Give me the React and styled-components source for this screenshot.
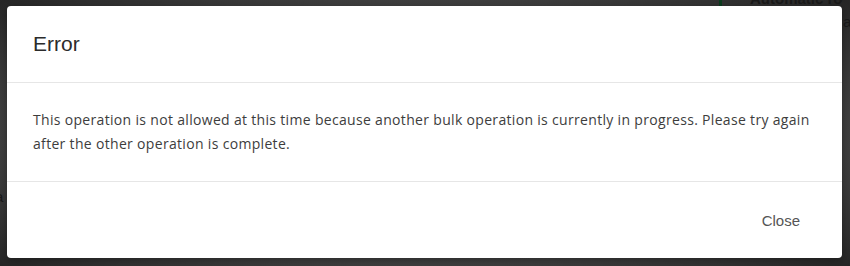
import styled, { createGlobalStyle } from "styled-components";

const GlobalStyle = createGlobalStyle`
  html, body {
    margin: 0;
    padding: 0;
  }
  body {
    width: 850px;
    height: 266px;
    overflow: hidden;
    background: #3a3a3a;
  }
`;

const ErrorDialog = () => {
  return (
    <Page>
      <GlobalStyle />
      <Behind>
        <GreenBar />
        <BehindTitle>Automatic ro</BehindTitle>
        <BehindLetter>a</BehindLetter>
        <SideLetter>a</SideLetter>
      </Behind>
      <Dialog role="dialog" aria-labelledby="dlg-title">
        <Header>
          <Title id="dlg-title">Error</Title>
        </Header>
        <Body>
          This operation is not allowed at this time because another bulk operation is currently in progress. Please try again
          after the other operation is complete.
        </Body>
        <Footer>
          <CloseButton type="button">Close</CloseButton>
        </Footer>
      </Dialog>
    </Page>
  );
};

export default ErrorDialog;

/* ---------------------------- STYLED COMPONENTS --------------------------- */

const Page = styled.div`
  position: relative;
  width: 850px;
  height: 266px;
  box-sizing: border-box;
  padding: 6px 8px 8px 7px;
  background: radial-gradient(ellipse at center, #5a5a5a 0%, #3f3f3f 70%, #262626 100%);
`;

const Behind = styled.div`
  position: absolute;
  inset: 0;
  pointer-events: none;
  font-family: "Liberation Sans", Arial, sans-serif;
  color: #1e1e1e;
`;

const GreenBar = styled.div`
  position: absolute;
  left: 719px;
  top: 0;
  width: 3px;
  height: 6px;
  background: #0c3d1f;
`;

const BehindTitle = styled.div`
  position: absolute;
  left: 750px;
  top: -10px;
  font-size: 15px;
  font-weight: bold;
  color: #1a1a1a;
`;

const BehindLetter = styled.div`
  position: absolute;
  left: 843px;
  top: 13px;
  font-size: 15px;
  color: #1a1a1a;
`;

const SideLetter = styled.div`
  position: absolute;
  left: -5px;
  top: 188px;
  font-size: 15px;
  color: #1a1a1a;
`;

const Dialog = styled.div`
  position: relative;
  width: 835px;
  height: 252px;
  display: flex;
  flex-direction: column;
  background: #ffffff;
  border-radius: 4px;
  box-shadow: 0 2px 10px rgba(0, 0, 0, 0.35);
  overflow: hidden;
`;

const Header = styled.div`
  height: 77px;
  display: flex;
  align-items: center;
  padding: 0 26px;
  border-bottom: 1px solid #e6e6e6;
  box-sizing: border-box;
`;

const Title = styled.h2`
  margin: 0;
  font-family: "Liberation Sans", Arial, sans-serif;
  font-weight: normal;
  font-size: 21px;
  color: #2b2b2b;
`;

const Body = styled.div`
  height: 99px;
  box-sizing: border-box;
  padding: 25px 26px;
  font-family: "Open Sans", "Noto Sans", sans-serif;
  font-size: 14px;
  letter-spacing: 0.32px;
  line-height: 24px;
  color: #3d3d3d;
  border-bottom: 1px solid #e6e6e6;
`;

const Footer = styled.div`
  flex: 1;
  display: flex;
  align-items: center;
  justify-content: flex-end;
  padding: 0 30px;
`;

const CloseButton = styled.button`
  border: none;
  background: transparent;
  padding: 8px 12px;
  font-family: "Liberation Sans", Arial, sans-serif;
  font-size: 15px;
  color: #555555;
  cursor: pointer;
`;
